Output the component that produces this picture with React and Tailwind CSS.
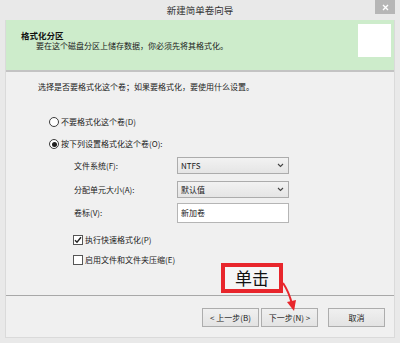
const font = "font-['Noto_Sans_CJK_SC','Noto_Sans',sans-serif]";

function Radio({ checked, label }) {
  return (
    <div className="flex items-center h-[12px] pl-[43px]">
      <span className="w-[10px] h-[10px] rounded-full border border-[#3c3c3c] bg-white flex items-center justify-center">
        {checked && <span className="w-[5px] h-[5px] rounded-full bg-[#1e1e1e]" />}
      </span>
      <span className="ml-[2px]">{label}</span>
    </div>
  );
}

function Check({ checked, label }) {
  return (
    <div className="flex items-center h-[12px] pl-[67px]">
      <span className="w-[10px] h-[10px] border border-[#555] bg-white flex items-center justify-center">
        {checked && (
          <svg width="8" height="8" viewBox="0 0 8 8">
            <path d="M1 4.2 L3 6.3 L7 1.3" fill="none" stroke="#222" strokeWidth="1.4" />
          </svg>
        )}
      </span>
      <span className="ml-[2px]">{label}</span>
    </div>
  );
}

function Select({ value }) {
  return (
    <div className="w-[112px] h-[17px] border border-[#acacac] bg-gradient-to-b from-[#f2f2f2] to-[#e5e5e5] flex items-center justify-between pl-[3px] pr-[4px]">
      <span>{value}</span>
      <svg width="7" height="5" viewBox="0 0 7 5">
        <path d="M1 1 L3.5 3.5 L6 1" fill="none" stroke="#444" strokeWidth="1.1" />
      </svg>
    </div>
  );
}

function Field({ label, children, mt }) {
  return (
    <div className={`flex items-center pl-[68px] ${mt}`}>
      <span className="w-[103px]">{label}</span>
      {children}
    </div>
  );
}

function Btn({ children }) {
  return (
    <div className="w-[57px] h-[19px] border border-[#adadad] bg-gradient-to-b from-[#f0f0f0] to-[#e3e3e3] flex items-center justify-center">
      {children}
    </div>
  );
}

export default function App() {
  return (
    <div className={`relative w-[400px] h-[343px] bg-[#e9e9e9] flex flex-col text-[8px] leading-[12px] text-[#1a1a1a] ${font}`}>
      {/* title bar */}
      <div className="relative h-[20px] flex items-center justify-center text-[9.5px] text-[#333]">
        新建简单卷向导
        <div className="absolute right-[5px] top-0 w-[20px] h-[14px] bg-[#b6b6b6] flex items-center justify-center">
          <svg width="7" height="7" viewBox="0 0 7 7">
            <path d="M1 1 L6 6 M6 1 L1 6" stroke="#fff" strokeWidth="1.4" />
          </svg>
        </div>
      </div>

      <div className="mx-[5px] mb-[5px] flex-1 flex flex-col border-l border-r border-b border-[#dadada]">
        {/* header */}
        <div className="h-[52px] bg-[#cdeccb] border-b-2 border-[#c3c3c3] flex justify-between pt-[4px] pr-[3px]">
          <div className="pl-[15px] pt-[5px]">
            <div className="font-bold text-[#111] text-[8.5px]">格式化分区</div>
            <div className="pl-[15px] -mt-[1px]">要在这个磁盘分区上储存数据，你必须先将其格式化。</div>
          </div>
          <div className="w-[33px] h-[33px] bg-white" />
        </div>

        {/* body */}
        <div className="flex-1 flex flex-col bg-[#f0f0f0] pt-[9px]">
          <div className="pl-[32px]">选择是否要格式化这个卷；如果要格式化，要使用什么设置。</div>
          <div className="mt-[23px]"><Radio label="不要格式化这个卷(D)" /></div>
          <div className="mt-[10px]"><Radio checked label="按下列设置格式化这个卷(O):" /></div>
          <Field label="文件系统(F):" mt="mt-[7px]"><Select value="NTFS" /></Field>
          <Field label="分配单元大小(A):" mt="mt-[7px]"><Select value="默认值" /></Field>
          <Field label="卷标(V):" mt="mt-[5px]">
            <div className="w-[112px] h-[20px] border border-[#b5b5b5] bg-white flex items-center pl-[3px]">新加卷</div>
          </Field>
          <div className="mt-[11px]"><Check checked label="执行快速格式化(P)" /></div>
          <div className="mt-[8px]"><Check label="启用文件和文件夹压缩(E)" /></div>
        </div>

        {/* footer */}
        <div className="h-[42px] bg-[#f0f0f0] border-t border-[#a8a8a8] flex items-center justify-end pr-[9px] pt-[2px]">
          <Btn>&lt; 上一步(B)</Btn>
          <div className="ml-[2px]"><Btn>下一步(N) &gt;</Btn></div>
          <div className="ml-[10px]"><Btn>取消</Btn></div>
        </div>
      </div>

      {/* annotation */}
      <div className="absolute left-[221px] top-[263px] w-[62px] h-[30px] border-[4px] border-[#e8262c] bg-[#f5f5f5] flex items-center justify-center text-[17px] font-normal text-[#111]">
        单击
      </div>
      <svg className="absolute left-[280px] top-[280px]" width="20" height="34" viewBox="0 0 20 34">
        <path d="M3 3 Q9 12 12 24" fill="none" stroke="#e8262c" strokeWidth="2" />
        <path d="M7 22 L14 31 L16 20 Z" fill="#e8262c" />
      </svg>
    </div>
  );
}
